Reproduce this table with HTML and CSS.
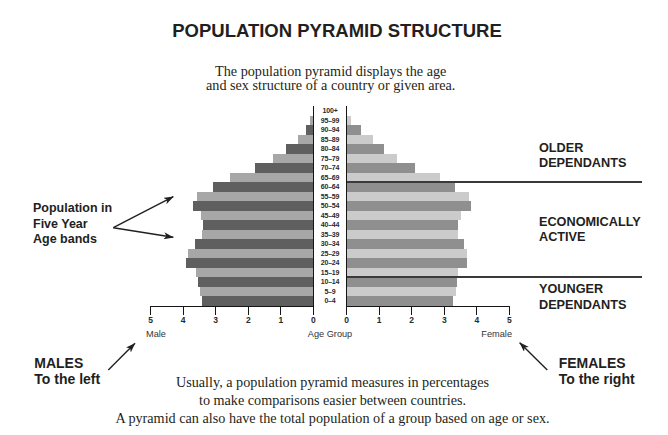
FILE: index.html
```html
<!DOCTYPE html>
<html lang="en">
<head>
<meta charset="utf-8">
<title>Population Pyramid Structure</title>
<link rel="stylesheet" href="styles.css">
</head>
<body>
<div class="page">
  <h1 class="title">POPULATION PYRAMID STRUCTURE</h1>
  <p class="intro">The population pyramid displays the age<br>and sex structure of a country or given area.</p>

  <div class="chart">
    <div class="note-left">Population in<br>Five Year<br>Age bands</div>

    <div class="bars">
      <div class="row dark"><div class="male"><span class="bar" style="width:0%"></span></div><div class="age">100+</div><div class="female"><span class="bar" style="width:0%"></span></div></div>
      <div class="row light"><div class="male"><span class="bar" style="width:1.6%"></span></div><div class="age">95–99</div><div class="female"><span class="bar" style="width:2.4%"></span></div></div>
      <div class="row dark"><div class="male"><span class="bar" style="width:4%"></span></div><div class="age">90–94</div><div class="female"><span class="bar" style="width:8.6%"></span></div></div>
      <div class="row light"><div class="male"><span class="bar" style="width:9.4%"></span></div><div class="age">85–89</div><div class="female"><span class="bar" style="width:16%"></span></div></div>
      <div class="row dark"><div class="male"><span class="bar" style="width:16.6%"></span></div><div class="age">80–84</div><div class="female"><span class="bar" style="width:22.8%"></span></div></div>
      <div class="row light"><div class="male"><span class="bar" style="width:24.4%"></span></div><div class="age">75–79</div><div class="female"><span class="bar" style="width:30.4%"></span></div></div>
      <div class="row dark"><div class="male"><span class="bar" style="width:35.4%"></span></div><div class="age">70–74</div><div class="female"><span class="bar" style="width:41.6%"></span></div></div>
      <div class="row light"><div class="male"><span class="bar" style="width:51%"></span></div><div class="age">65–69</div><div class="female"><span class="bar" style="width:56.8%"></span></div></div>
      <div class="row dark"><div class="male"><span class="bar" style="width:61.4%"></span></div><div class="age">60–64</div><div class="female"><span class="bar" style="width:66%"></span></div></div>
      <div class="row light"><div class="male"><span class="bar" style="width:71%"></span></div><div class="age">55–59</div><div class="female"><span class="bar" style="width:74.8%"></span></div></div>
      <div class="row dark"><div class="male"><span class="bar" style="width:73.4%"></span></div><div class="age">50–54</div><div class="female"><span class="bar" style="width:75.8%"></span></div></div>
      <div class="row light"><div class="male"><span class="bar" style="width:68.8%"></span></div><div class="age">45–49</div><div class="female"><span class="bar" style="width:70%"></span></div></div>
      <div class="row dark"><div class="male"><span class="bar" style="width:67.4%"></span></div><div class="age">40–44</div><div class="female"><span class="bar" style="width:67.8%"></span></div></div>
      <div class="row light"><div class="male"><span class="bar" style="width:68.4%"></span></div><div class="age">35–39</div><div class="female"><span class="bar" style="width:67.8%"></span></div></div>
      <div class="row dark"><div class="male"><span class="bar" style="width:72.4%"></span></div><div class="age">30–34</div><div class="female"><span class="bar" style="width:71.8%"></span></div></div>
      <div class="row light"><div class="male"><span class="bar" style="width:76.6%"></span></div><div class="age">25–29</div><div class="female"><span class="bar" style="width:73.8%"></span></div></div>
      <div class="row dark"><div class="male"><span class="bar" style="width:78.2%"></span></div><div class="age">20–24</div><div class="female"><span class="bar" style="width:73.8%"></span></div></div>
      <div class="row light"><div class="male"><span class="bar" style="width:71.8%"></span></div><div class="age">15–19</div><div class="female"><span class="bar" style="width:68.2%"></span></div></div>
      <div class="row dark"><div class="male"><span class="bar" style="width:70.4%"></span></div><div class="age">10–14</div><div class="female"><span class="bar" style="width:67.2%"></span></div></div>
      <div class="row light"><div class="male"><span class="bar" style="width:69.6%"></span></div><div class="age">5–9</div><div class="female"><span class="bar" style="width:66.6%"></span></div></div>
      <div class="row dark"><div class="male"><span class="bar" style="width:68.2%"></span></div><div class="age">0–4</div><div class="female"><span class="bar" style="width:65%"></span></div></div>
    </div>

    <div class="divider divider-older"></div>
    <div class="divider divider-younger"></div>

    <div class="group older">OLDER<br>DEPENDANTS</div>
    <div class="group active">ECONOMICALLY<br>ACTIVE</div>
    <div class="group younger">YOUNGER<br>DEPENDANTS</div>

    <div class="axis axis-male">
      <div class="tick">5</div><div class="tick">4</div><div class="tick">3</div><div class="tick">2</div><div class="tick">1</div><div class="tick">0</div>
    </div>
    <div class="axis axis-female">
      <div class="tick">0</div><div class="tick">1</div><div class="tick">2</div><div class="tick">3</div><div class="tick">4</div><div class="tick">5</div>
    </div>
    <div class="axis-labels"><span>Male</span><span>Age Group</span><span>Female</span></div>
  </div>

  <div class="bottom">
    <div class="side-label males">MALES<br>To the left</div>
    <p class="footnote">Usually, a population pyramid measures in percentages<br>to make comparisons easier between countries.<br>A pyramid can also have the total population of a group based on age or sex.</p>
    <div class="side-label females">FEMALES<br>To the right</div>
  </div>

  <svg class="arrows" width="668" height="435" viewBox="0 0 668 435" aria-hidden="true">
    <defs>
      <marker id="head" viewBox="0 0 10 7" refX="9.5" refY="3.5" markerWidth="10" markerHeight="7" markerUnits="userSpaceOnUse" orient="auto">
        <path d="M0,0 L10,3.5 L0,7 L2.6,3.5 Z" fill="#231f20"/>
      </marker>
    </defs>
    <g stroke="#231f20" stroke-width="1.4" fill="none" marker-end="url(#head)">
      <line x1="113.3" y1="227.7" x2="173.3" y2="196.7"/>
      <line x1="113.3" y1="227.7" x2="173.3" y2="237.3"/>
      <line x1="108.3" y1="370" x2="135" y2="343.3"/>
      <line x1="547.3" y1="370" x2="519.7" y2="342.7"/>
    </g>
  </svg>
</div>
</body>
</html>
```

FILE: styles.css
```css
html, body {
  margin: 0;
  padding: 0;
  background: #ffffff;
}

body {
  font-family: "Liberation Sans", Arial, sans-serif;
  color: #231f20;
}

.page {
  position: relative;
  width: 668px;
  height: 435px;
  overflow: hidden;
}

.title {
  margin: 0;
  padding: 20px 0 0 6px;
  font-size: 18.5px;
  line-height: 22px;
  font-weight: bold;
  text-align: center;
  white-space: nowrap;
}

.intro {
  margin: 21.75px 0 0;
  padding-right: 6.6px;
  font-family: "Liberation Serif", "Times New Roman", serif;
  font-size: 14.2px;
  line-height: 14.5px;
  text-align: center;
  white-space: nowrap;
}

/* ---------- chart ---------- */
.chart {
  display: grid;
  grid-template-columns: 150px 163px 34px 163px 29px 1fr;
  grid-template-rows: repeat(21, 9.52px) auto auto;
  margin-top: 13.25px;
}

.note-left {
  grid-column: 1;
  grid-row: 1 / 22;
  align-self: start;
  margin-top: 95px;
  padding-left: 33px;
  font-size: 12.5px;
  line-height: 15.5px;
  font-weight: bold;
  white-space: nowrap;
}

.bars {
  grid-column: 2 / 5;
  grid-row: 1 / 22;
  display: flex;
  flex-direction: column;
}

.row {
  display: grid;
  grid-template-columns: 163px 34px 163px;
  height: 9.52px;
}

.male {
  display: flex;
  justify-content: flex-end;
}

.female {
  display: flex;
  justify-content: flex-start;
}

.bar {
  display: block;
  height: 100%;
}

.row.dark .male .bar { background: #5f5f5f; }
.row.light .male .bar { background: #a7a7a7; }
.row.dark .female .bar { background: #8f8f8f; }
.row.light .female .bar { background: #cbcbcb; }

.age {
  border-left: 1px solid #151515;
  border-right: 1px solid #151515;
  text-align: center;
  font-size: 7px;
  line-height: 9.52px;
  font-weight: bold;
  letter-spacing: -0.15px;
  color: #2a2a2a;
  white-space: nowrap;
}

.divider {
  grid-column: 4 / 7;
  align-self: start;
  height: 2px;
  margin-top: -1px;
  margin-right: 26px;
  background: #3a3a3a;
}

.divider-older { grid-row: 9; }
.divider-younger { grid-row: 19; }

.group {
  grid-column: 6;
  font-size: 12.7px;
  line-height: 15.6px;
  font-weight: bold;
  white-space: nowrap;
}

.older {
  grid-row: 1 / 9;
  align-self: end;
  margin-bottom: 10.3px;
}

.active {
  grid-row: 9 / 19;
  align-self: center;
  margin-top: 1.5px;
}

.younger {
  grid-row: 19 / 22;
  align-self: start;
  margin-top: 5.2px;
}

/* ---------- axis ---------- */
.axis {
  grid-row: 22;
  display: flex;
  justify-content: space-between;
  border-top: 1px solid #151515;
}

.axis-male {
  grid-column: 2;
  margin-right: -1px;
}

.axis-female {
  grid-column: 4;
  margin-left: -1px;
}

.tick {
  width: 1px;
  display: flex;
  flex-direction: column;
  align-items: center;
  font-size: 8.5px;
  line-height: 11px;
  font-weight: bold;
  color: #2a2a2a;
  white-space: nowrap;
}

.tick::before {
  content: "";
  flex: none;
  width: 1px;
  height: 8px;
  background: #151515;
}

.axis-labels {
  grid-column: 2 / 5;
  grid-row: 23;
  display: grid;
  grid-template-columns: 1fr auto 1fr;
  margin-top: 3px;
  font-size: 9.2px;
  line-height: 11px;
  color: #333333;
  white-space: nowrap;
}

.axis-labels span:first-child {
  justify-self: start;
  margin-left: -4px;
}

.axis-labels span:last-child {
  justify-self: end;
  margin-right: -2px;
}

/* ---------- bottom ---------- */
.bottom {
  display: grid;
  grid-template-columns: 110px 1fr 113px;
  margin-top: 16.5px;
}

.side-label {
  align-self: start;
  font-size: 14px;
  line-height: 15.7px;
  font-weight: bold;
  white-space: nowrap;
}

.males { padding-left: 34.3px; }
.females { padding-left: 3.7px; }

.footnote {
  margin: 18px 0 0;
  font-family: "Liberation Serif", "Times New Roman", serif;
  font-size: 14.2px;
  line-height: 17.7px;
  text-align: center;
  white-space: nowrap;
}

/* ---------- arrows overlay ---------- */
.arrows {
  position: absolute;
  top: 0;
  left: 0;
  pointer-events: none;
}
```
